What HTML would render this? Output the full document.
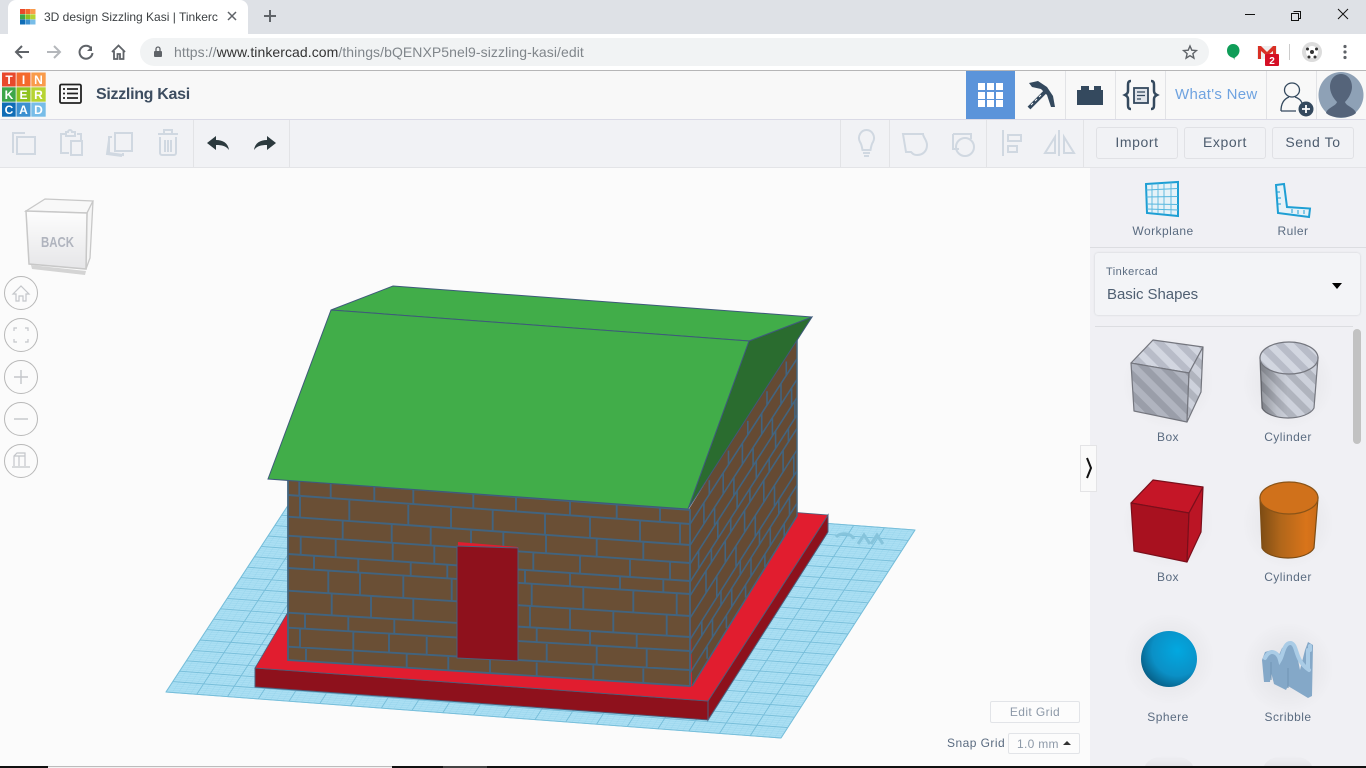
<!DOCTYPE html>
<html><head><meta charset="utf-8"><title>3D design Sizzling Kasi | Tinkercad</title>
<style>
html,body{margin:0;padding:0;width:1366px;height:768px;overflow:hidden;background:#fbfbfb;font-family:"Liberation Sans","DejaVu Sans",sans-serif}
.a{position:absolute}
.t{position:absolute;white-space:nowrap;color:#5a6b80;font-size:12px;letter-spacing:.45px}
.c{transform:translateX(-50%)}
.btn{position:absolute;top:127px;height:30px;border:1px solid #e0e1e5;border-radius:3px;background:#f1f2f5;color:#4d5c6e;font-size:14px;letter-spacing:.6px;text-align:center;line-height:29px}
.sep{position:absolute;width:1px;background:#e2e3e6}
</style></head><body>
<div class="a" style="left:0;top:0;width:1366px;height:34px;background:#dee1e6"></div>
<div class="a" style="left:8px;top:0;width:240px;height:34px;background:#fff;border-radius:8px 8px 0 0"></div>
<div class="a" style="left:0;top:34px;width:1366px;height:36px;background:#fff"></div>
<div class="a" style="left:140px;top:38px;width:1069px;height:28px;background:#f1f3f4;border-radius:14px"></div>
<div class="a" style="left:0;top:70px;width:1366px;height:1px;background:#b4b4b4"></div>
<div class="a" style="left:0;top:71px;width:1366px;height:48px;background:#f8f8f8;box-shadow:0 1px 2px #ccd"></div>
<div class="a" style="left:0;top:120px;width:1366px;height:47px;background:#f1f2f5;border-bottom:1px solid #e3e4e7"></div>
<div class="a" style="left:1090px;top:168px;width:276px;height:600px;background:#f0f0f4"></div>
<div class="a" style="left:966px;top:71px;width:49px;height:48px;background:#5b94da"></div>
<div class="sep" style="left:1065px;top:71px;height:48px"></div><div class="sep" style="left:1115px;top:71px;height:48px"></div><div class="sep" style="left:1165px;top:71px;height:48px"></div><div class="sep" style="left:1266px;top:71px;height:48px"></div><div class="sep" style="left:1316px;top:71px;height:48px"></div>
<div class="sep" style="left:193px;top:120px;height:47px"></div><div class="sep" style="left:289px;top:120px;height:47px"></div><div class="sep" style="left:840px;top:120px;height:47px"></div><div class="sep" style="left:889px;top:120px;height:47px"></div><div class="sep" style="left:986px;top:120px;height:47px"></div><div class="sep" style="left:1083px;top:120px;height:47px"></div>
<div class="a" style="left:1090px;top:247px;width:276px;height:1px;background:#dcdde1"></div>
<div class="a" style="left:1095px;top:253px;width:265px;height:62px;background:#f3f4f7;border-radius:3px;box-shadow:0 0 2px #ccced3"></div>
<div class="a" style="left:1095px;top:326px;width:258px;height:1px;background:#dcdde1"></div>
<div class="a" style="left:1353px;top:329px;width:8px;height:115px;background:#c2c2c2;border-radius:4px"></div>

<svg class="a" style="left:0;top:0" width="1366" height="768" viewBox="0 0 1366 768" xmlns="http://www.w3.org/2000/svg">
<defs>
<pattern id="s1" width="14" height="14" patternUnits="userSpaceOnUse" patternTransform="rotate(-45)"><rect width="14" height="14" fill="#d2d6e0"/><rect width="7" height="14" fill="#b8bcc8"/></pattern>
<pattern id="s2" width="14" height="14" patternUnits="userSpaceOnUse" patternTransform="rotate(-45)"><rect width="14" height="14" fill="#b0b4bf"/><rect width="7" height="14" fill="#9a9ea9"/></pattern>
<pattern id="s3" width="14" height="14" patternUnits="userSpaceOnUse" patternTransform="rotate(-45)"><rect width="14" height="14" fill="#cdd1db"/><rect width="7" height="14" fill="#b0b4be"/></pattern>
<linearGradient id="cg" x1="0" x2="1" y1="0" y2="0"><stop offset="0" stop-color="#7d4c14"/><stop offset=".35" stop-color="#b0661a"/><stop offset=".8" stop-color="#d9741a"/><stop offset="1" stop-color="#c96c18"/></linearGradient>
<linearGradient id="cgg" x1="0" x2="1" y1="0" y2="0"><stop offset="0" stop-color="#000" stop-opacity=".3"/><stop offset=".6" stop-color="#000" stop-opacity=".08"/><stop offset="1" stop-color="#000" stop-opacity="0"/></linearGradient>
<radialGradient id="sp" cx=".65" cy=".35" r=".75"><stop offset="0" stop-color="#02a8e0"/><stop offset=".6" stop-color="#0b90c6"/><stop offset="1" stop-color="#06587e"/></radialGradient>
<linearGradient id="cube" x1="0" x2="0" y1="0" y2="1"><stop offset="0" stop-color="#fdfdfd"/><stop offset="1" stop-color="#e6e6e8"/></linearGradient>
<radialGradient id="glow"><stop offset="0" stop-color="#000" stop-opacity=".07"/><stop offset="1" stop-color="#000" stop-opacity="0"/></radialGradient>
<linearGradient id="bglow" x1="0" x2="0" y1="0" y2="1"><stop offset="0" stop-color="#000" stop-opacity="0"/><stop offset="1" stop-color="#000" stop-opacity=".05"/></linearGradient>
</defs>

<!-- build plate -->
<polygon points="166,692 781,738 915,530 302,484" fill="#abdff3" stroke="#8fcfe8" stroke-width="1"/>
<path id="gridMinor" fill="none" stroke="#7cc5e2" stroke-width=".5" opacity=".35" d=""/>
<path id="gridMajor" fill="none" stroke="#76bdd9" stroke-width=".9" d=""/>
<path d="M836,537c5,-5 15,-4 18,2M858,544l6,-9 6,9M871,544l6,-9 6,9" fill="none" stroke="#86c4dc" stroke-width="3"/>

<!-- base -->
<polygon points="255,668 708,701 708,720 255,687" fill="#8e111c" stroke="#4b5f7c" stroke-width="1"/>
<polygon points="708,701 828,515 828,532 708,720" fill="#8e111c" stroke="#4b5f7c" stroke-width="1"/>
<polygon points="255,668 708,701 828,515 790,512 288,612" fill="#e11d2f" stroke="#4b5f7c" stroke-width=".8"/>

<!-- walls -->
<polygon points="288,480 690,510 690,686 288,660" fill="#6a4f35"/>
<polygon points="689,509 797,336 797,516 692,686" fill="#654a33"/>
<path id="brickF" fill="none" stroke="#42647f" stroke-width="1.900" d=""/>
<path id="brickS" fill="none" stroke="#42647f" stroke-width="1.600" d=""/>
<polygon points="288,480 690,510 690,686 288,660" fill="none" stroke="#42647f" stroke-width="1.800"/>
<path d="M797,336V516L692,686" fill="none" stroke="#42647f" stroke-width="1.500"/>

<!-- door -->
<polygon points="458,542 518,547 518,549 458,546" fill="#e11d2f"/>
<polygon points="457,546 518,548 518,661 457,658" fill="#8e111c" stroke="#4b5f7c" stroke-width="1"/>

<!-- roof -->
<polygon points="749,341 812,317 688,509" fill="#2a6c2f" stroke="#3e5a7a" stroke-width="1"/>
<polygon points="393,286 812,317 749,341 331,310" fill="#41ad49" stroke="#3e5a7a" stroke-width="1"/>
<polygon points="331,310 749,341 688,509 268,479" fill="#41ad49" stroke="#3e5a7a" stroke-width="1"/>

<!-- view cube -->
<polygon points="31,265 86,271 85,275 32,269" fill="#d4d4d4"/>
<polygon points="26,211 45,199 93,201 87,213" fill="#f8f8f8" stroke="#c8c8c8" stroke-width="1.300"/>
<polygon points="87,213 93,201 90,258 86,269" fill="#f5f5f5" stroke="#c8c8c8" stroke-width="1.300"/>
<polygon points="26,211 87,213 86,269 29,264" fill="url(#cube)" stroke="#c8c8c8" stroke-width="1.500"/>
<text x="41" y="247" textLength="33" lengthAdjust="spacingAndGlyphs" font-size="15" font-weight="700" fill="#b0b4be" font-family="Liberation Sans">BACK</text>

<!-- nav circles -->
<g fill="#fbfbfb" stroke="#b8b8b8"><circle cx="21" cy="293" r="16.5"/><circle cx="21" cy="335" r="16.5"/><circle cx="21" cy="377" r="16.5"/><circle cx="21" cy="419" r="16.5"/><circle cx="21" cy="461" r="16.5"/></g>
<g fill="none" stroke="#c4c6ca" stroke-width="1.200">
<path d="M13,294l8,-8 8,8h-3v7h-3v-5h-4v5h-3v-7z"/>
<path d="M14,331v-3h3M25,328h3v3M28,339v3h-3M17,342h-3v-3"/>
<path d="M14,377h14M21,370v14" stroke-width="1.400"/>
<path d="M14,419h14" stroke-width="1.400"/>
<path d="M14,466v-10l3,-3h8v13M14,456h11M19,456v10M12,467h18"/>
</g>

<!-- chevron tab -->
<rect x="1080.500" y="445.500" width="16" height="46" fill="#fafafa" stroke="#e4e4e6"/>
<path d="M1087,458l4,10l-4,10" fill="none" stroke="#111" stroke-width="2"/>

<!-- chrome icons -->
<g fill="none" stroke="#5f6368" stroke-width="2">
<path d="M29,52H16M22,46l-6,6 6,6"/>
<path d="M47,52h13M54,46l6,6 -6,6" stroke="#b4b7bb"/>
<path d="M91,48a6.500,6.500 0 1 0 1.500,5"/>
<path d="M112,52l6.500,-6.500 6.500,6.500M114,51v8h3.500v-5h2.500v5h3.500v-8" stroke-width="1.800"/>
<path d="M1190,46l1.800,4.200 4.600,.4 -3.500,3 1,4.500 -3.900,-2.400 -3.900,2.400 1,-4.500 -3.500,-3 4.600,-.4z" stroke-width="1.400"/>
</g>
<path d="M92,46v5h-5z" fill="#5f6368"/>
<rect x="154" y="51" width="8" height="6" rx="1" fill="#5f6368"/><path d="M156,51v-2a2,2 0 0 1 4,0v2" fill="none" stroke="#5f6368" stroke-width="1.300"/>
<path d="M270,10v12M264,16h12" fill="none" stroke="#5f6368" stroke-width="2"/>
<path d="M228,12l8,8M236,12l-8,8" fill="none" stroke="#5f6368" stroke-width="1.500"/>
<path d="M1245,14.500h10" stroke="#111" stroke-width="1"/>
<path d="M1293.500,11.500h7v7h-2M1291.500,13.500h7v7h-7z" fill="none" stroke="#111"/>
<path d="M1338,9l10,10M1348,9l-10,10" stroke="#111" stroke-width="1"/>
<path d="M1233,44c4,0 6.500,3 6.500,6.500c0,4 -3,6 -5,7.500v2l-1,-2c-4,-1 -6.500,-3.500 -6.500,-7.500c0,-3.500 2.500,-6.500 6,-6.500z" fill="#0f9d58"/>
<rect x="1257" y="46" width="20" height="13" fill="#eee"/><path d="M1258,46h3l6,6 6,-6h3v13h-3v-8l-6,5 -6,-5v8h-3z" fill="#d93025"/>
<rect x="1265" y="54" width="14" height="12" rx="1" fill="#d50f25"/><text x="1272" y="64" text-anchor="middle" font-size="10" font-weight="700" fill="#fff" font-family="Liberation Sans">2</text>
<path d="M1289.500,44v16" stroke="#ccc"/>
<circle cx="1312" cy="52" r="10" fill="#dcdcdc"/><circle cx="1312" cy="52" r="6" fill="#fff"/><circle cx="1312" cy="52" r="2" fill="#333"/><circle cx="1307.500" cy="49" r="1.500" fill="#333"/><circle cx="1316.500" cy="49" r="1.500" fill="#333"/><circle cx="1309" cy="57" r="1.500" fill="#333"/><circle cx="1315" cy="57" r="1.500" fill="#333"/>
<g fill="#5f6368"><circle cx="1345" cy="46.500" r="1.600"/><circle cx="1345" cy="52" r="1.600"/><circle cx="1345" cy="57.500" r="1.600"/></g>

<!-- favicon -->
<g><rect x="20" y="9" width="5" height="5" fill="#e8482b"/><rect x="25.300" y="9" width="5" height="5" fill="#f4692c"/><rect x="30.500" y="9" width="5" height="5" fill="#f99b4b"/><rect x="20" y="14.300" width="5" height="5" fill="#3da64a"/><rect x="25.300" y="14.300" width="5" height="5" fill="#8ec21f"/><rect x="30.500" y="14.300" width="5" height="5" fill="#b6d433"/><rect x="20" y="19.500" width="5" height="5" fill="#0f6cb6"/><rect x="25.300" y="19.500" width="5" height="5" fill="#3c90d0"/><rect x="30.500" y="19.500" width="5" height="5" fill="#78bde8"/></g>

<!-- logo -->
<g font-family="Liberation Sans" font-size="12" font-weight="700" fill="#fff" text-anchor="middle">
<rect x="2" y="72.500" width="13.700" height="14" fill="#e8482b"/><text x="9" y="84">T</text>
<rect x="16.500" y="72.500" width="14" height="14" fill="#f4692c"/><text x="23.500" y="84">I</text>
<rect x="31.300" y="72.500" width="14.400" height="14" fill="#f99b4b"/><text x="38.500" y="84">N</text>
<rect x="2" y="87.300" width="13.700" height="14.400" fill="#3da64a"/><text x="9" y="99">K</text>
<rect x="16.500" y="87.300" width="14" height="14.400" fill="#8ec21f"/><text x="23.500" y="99">E</text>
<rect x="31.300" y="87.300" width="14.400" height="14.400" fill="#b6d433"/><text x="38.500" y="99">R</text>
<rect x="2" y="102.500" width="13.700" height="14.200" fill="#0f6cb6"/><text x="9" y="114">C</text>
<rect x="16.500" y="102.500" width="14" height="14.200" fill="#3c90d0"/><text x="23.500" y="114">A</text>
<rect x="31.300" y="102.500" width="14.400" height="14.200" fill="#78bde8"/><text x="38.500" y="114">D</text>
</g>

<!-- list icon -->
<rect x="60" y="84.500" width="21" height="18.500" rx="1.500" fill="none" stroke="#222" stroke-width="1.800"/>
<path d="M67,89h11M67,93.500h11M67,98h11M63,89h2M63,93.500h2M63,98h2" stroke="#222" stroke-width="1.800"/>

<!-- header right icons -->
<g fill="#fff"><rect x="978" y="83" width="7" height="7"/><rect x="987" y="83" width="7" height="7"/><rect x="996" y="83" width="7" height="7"/><rect x="978" y="92" width="7" height="7"/><rect x="987" y="92" width="7" height="7"/><rect x="996" y="92" width="7" height="7"/><rect x="978" y="100" width="7" height="7"/><rect x="987" y="100" width="7" height="7"/><rect x="996" y="100" width="7" height="7"/></g>
<path d="M1029,83L1038,81L1047,87L1053,96L1055,107L1051,107L1047,95L1041,89L1032,87z" fill="#34495e"/>
<path d="M1029,108L1047,90" fill="none" stroke="#34495e" stroke-width="4"/>
<path d="M1031,105l2,-2M1035,101l2,-2M1039,97l2,-2" stroke="#f8f8f8" stroke-width="1"/>
<path d="M1077,90h4v-4h8v4h5v-4h7v4h2v15h-26z" fill="#34495e"/>
<g fill="none" stroke="#34495e" stroke-width="2.500"><path d="M1131,81c-3,0 -3,2 -3,5v5c0,2 -1,3 -3,4c2,1 3,2 3,4v5c0,3 0,5 3,5"/><path d="M1151,81c3,0 3,2 3,5v5c0,2 1,3 3,4c-2,1 -3,2 -3,4v5c0,3 0,5 -3,5"/><rect x="1134" y="88" width="14" height="15" stroke-width="1.800" fill="#e0e4ea"/><path d="M1137,92h8M1137,95.500h8M1137,99h4" stroke-width="1.200"/></g>
<g fill="none" stroke="#34495e" stroke-width="1.300"><ellipse cx="1292" cy="90" rx="7.500" ry="7"/><path d="M1281,111c0,-8 3,-12 8,-14M1295,97c3,1 6,3 7,6M1281,111h15"/></g>
<circle cx="1306" cy="109" r="7.500" fill="#34495e"/><path d="M1302,109h8M1306,105v8" stroke="#fff" stroke-width="1.800"/>
<ellipse cx="1341" cy="95" rx="22.500" ry="23" fill="#8ea1b6"/>
<path d="M1326,113c1,-5 10,-7 11,-11c-4,-4 -7,-10 -7,-15c0,-8 5,-13 11,-13s11,5 11,13c0,5 -3,11 -7,15c1,4 10,6 11,11c-6,6 -24,6 -30,0z" fill="#55647a"/>

<!-- toolbar icons -->
<g fill="none" stroke="#d0d8e1" stroke-width="2">
<path d="M25,133h-12v20M17,137h18v17h-18z" />
<path d="M66,134h-5v19h8M77,134h4v7M71,141h11v14h-11zM66,135v-3h2a2,2 0 0 1 4,0h3v4h-9z"/>
<path d="M115,133h17v18h-17zM112,137h-3v16l14,2v-2M109,140l-2,14 15,2"/>
<path d="M158,134h20M164,133v-3h8v3M160,137v16a2,2 0 0 0 2,2h12a2,2 0 0 0 2,-2v-16M165,140v12M168,140v12M171,140v12"/>
<path d="M873,142a7.500,8 0 1 0 -13,0c1.500,2 2,5 2.500,8h8c.5,-3 1,-6 2.500,-8zM863,153h7M864,156h5"/>
<path d="M903,134h20c0,3 4,6 4,11c0,6 -4,10 -10,10c-3,0 -4,-1 -6,-3h-5z"/>
<path d="M953,134h18v5M953,134v15h6"/><circle cx="965" cy="147" r="9"/>
<path d="M1003,130v26M1008,135h13v6h-13zM1008,146h9v6h-9z"/>
<path d="M1059,130v26M1055,137v16h-10zM1064,137v16h10z"/>
</g>
<g fill="#2c3a3e"><path d="M207,143l9,-7v4c7,0 12,3 13,10c-3,-4 -7,-5 -13,-5v5z"/><path d="M276,143l-9,-7v4c-7,0 -12,3 -13,10c3,-4 7,-5 13,-5v5z"/></g>

<!-- workplane / ruler -->
<g fill="#e6f2f8" stroke="#1e9fd4"><polygon points="1146,184 1178,182 1178,216 1147,213" stroke-width="2"/><path d="M1152,184v29M1158,183.500v30M1164,183v31M1171,182.500v32M1146.500,190l31,-1.500M1146.500,197l31,-.5M1147,204l31,.5M1147,209l31,1" stroke-width=".9" stroke="#55b6de"/></g>
<g fill="#e6f2f8" stroke="#1e9fd4"><polygon points="1276,185 1284,184 1287,207 1310,208.500 1309,217 1278,213" stroke-width="2"/><path d="M1277,192h3M1278,198h3M1278,204h3M1292,213v-4M1298,214v-4M1304,214v-4" stroke-width="1"/></g>

<!-- dropdown arrow -->
<path d="M1332,283h10l-5,6z" fill="#000"/>

<!-- shapes -->
<ellipse cx="1168" cy="383" rx="46" ry="46" fill="url(#glow)"/><ellipse cx="1288" cy="383" rx="46" ry="46" fill="url(#glow)"/>
<ellipse cx="1168" cy="523" rx="46" ry="46" fill="url(#glow)"/><ellipse cx="1288" cy="523" rx="46" ry="46" fill="url(#glow)"/>
<ellipse cx="1169" cy="659" rx="46" ry="46" fill="url(#glow)"/><ellipse cx="1288" cy="668" rx="46" ry="46" fill="url(#glow)"/>
<path d="M1145,766c5,-14 43,-14 48,0z" fill="url(#bglow)"/><path d="M1264,766c5,-14 43,-14 48,0z" fill="url(#bglow)"/>

<g stroke="#74767e" stroke-width="1.200" stroke-linejoin="round">
<polygon points="1131,363 1153,340 1203,347 1189,373" fill="url(#s1)"/>
<polygon points="1131,363 1189,373 1187,422 1134,411" fill="url(#s2)"/>
<polygon points="1189,373 1203,347 1201,392 1187,422" fill="url(#s3)"/>
</g>
<g stroke="#7a0f1b" stroke-width="1.200" stroke-linejoin="round">
<polygon points="1131,503 1153,480 1203,487 1189,513" fill="#c51627"/>
<polygon points="1131,503 1189,513 1187,562 1134,551" fill="#a8111f"/>
<polygon points="1189,513 1203,487 1201,532 1187,562" fill="#bb1525"/>
</g>
<path d="M1260,358l2,50c3,6 14,10 26,10s23,-4 26,-10l4,-50z" fill="url(#s3)" stroke="#74767e" stroke-width="1.200"/>
<path d="M1260,358l2,50c3,6 14,10 26,10v-44c-12,0 -25,-6 -28,-16z" fill="url(#cgg)"/>
<ellipse cx="1289" cy="358" rx="29" ry="16" fill="url(#s1)" stroke="#74767e" stroke-width="1.200"/>
<path d="M1260,498l2,50c3,6 14,10 26,10s23,-4 26,-10l4,-50z" fill="url(#cg)" stroke="#7d4c14" stroke-width="1.200"/>
<ellipse cx="1289" cy="498" rx="29" ry="16" fill="#d0711b" stroke="#8a5418" stroke-width="1.200"/>
<circle cx="1169" cy="659" r="28" fill="url(#sp)"/>
<path d="M1262,660L1264,682L1270,682L1271,672L1274,684L1286,690L1288,686L1308,698L1312,696L1313,645L1308,642L1305,650L1300,670L1296,650L1290,643L1282,648L1279,655L1272,650L1265,652z" fill="#84a8c8"/>
<path d="M1265,658C1270,648 1278,652 1280,660C1283,655 1284,642 1291,643C1298,645 1294,660 1309,670" fill="none" stroke="#aaccE6" stroke-width="4" stroke-linecap="round"/>
<path d="M1308,668V650M1310,650v-4" fill="none" stroke="#aaccE6" stroke-width="4" stroke-linecap="round"/>
<path d="M1271,662v18M1288,668v20" stroke="#6f94b5" stroke-width="1"/>

<!-- bottom strip -->
<rect x="0" y="766" width="1366" height="2" fill="#111"/>
<rect x="48" y="766" width="344" height="1" fill="#bcbcbc"/><rect x="48" y="767" width="344" height="1" fill="#f2f2f2"/>
<rect x="443" y="766" width="44" height="2" fill="#444"/>
</svg>

<div class="t" style="left:44px;top:10px;width:174px;overflow:hidden;color:#3c4043;letter-spacing:0">3D design Sizzling Kasi | Tinkercad</div>
<div class="t" style="left:174px;top:44px;font-size:14px;letter-spacing:.07px;color:#80868b">https://<span style="color:#333">www.tinkercad.com</span>/things/bQENXP5nel9-sizzling-kasi/edit</div>
<div class="t" style="left:96px;top:86px;font-size:16px;font-weight:700;color:#3d4d60;letter-spacing:-.3px">Sizzling Kasi</div>
<div class="t" style="left:1175px;top:86px;font-size:15px;color:#6fa3e0;letter-spacing:.3px">What's New</div>
<div class="btn" style="left:1096px;width:80px">Import</div>
<div class="btn" style="left:1184px;width:80px">Export</div>
<div class="btn" style="left:1272px;width:80px">Send To</div>
<div class="t c" style="left:1163px;top:224px">Workplane</div>
<div class="t c" style="left:1293px;top:224px">Ruler</div>
<div class="t" style="left:1106px;top:266px;font-size:11px">Tinkercad</div>
<div class="t" style="left:1107px;top:286px;font-size:15px;color:#4f5f72;letter-spacing:-.05px">Basic Shapes</div>
<div class="t c" style="left:1168px;top:430px">Box</div>
<div class="t c" style="left:1288px;top:430px">Cylinder</div>
<div class="t c" style="left:1168px;top:570px">Box</div>
<div class="t c" style="left:1288px;top:570px">Cylinder</div>
<div class="t c" style="left:1168px;top:710px">Sphere</div>
<div class="t c" style="left:1288px;top:710px">Scribble</div>
<div class="a" style="left:990px;top:701px;width:88px;height:20px;background:#fcfcfc;border:1px solid #e2e4e8;border-radius:2px;color:#8d99a8;font-size:12px;letter-spacing:.4px;text-align:center;line-height:20px">Edit Grid</div>
<div class="t" style="left:947px;top:736px">Snap Grid</div>
<div class="a" style="left:1008px;top:733px;width:70px;height:19px;background:#fcfcfc;border:1px solid #e2e4e8;border-radius:2px;color:#8d99a8;font-size:12px;letter-spacing:.3px;line-height:21px;padding-left:0"><span style="margin-left:8px">1.0 mm</span><span style="position:absolute;left:54px;top:7px;width:0;height:0;border:4px solid transparent;border-top:0;border-bottom:4px solid #333"></span></div>

<script>
(function(){
function P(u,v){var A=[166,692],B=[781,738],C=[915,530],D=[302,484];
 return [(1-v)*((1-u)*A[0]+u*B[0])+v*((1-u)*D[0]+u*C[0]),(1-v)*((1-u)*A[1]+u*B[1])+v*((1-u)*D[1]+u*C[1])];}
function seg(a,b){return "M"+a[0].toFixed(1)+","+a[1].toFixed(1)+"L"+b[0].toFixed(1)+","+b[1].toFixed(1);}
var maj="",min="",i,n=20;
for(i=0;i<=n;i++){maj+=seg(P(i/n,0),P(i/n,1))+seg(P(0,i/n),P(1,i/n));}
for(i=0;i<=100;i++){if(i%5){min+=seg(P(i/100,0),P(i/100,1))+seg(P(0,i/100),P(1,i/100));}}
document.getElementById("gridMajor").setAttribute("d",maj);
document.getElementById("gridMinor").setAttribute("d",min);
var L=[480.5,495,516.7,535.7,554,568,590.7,612.7,627.7,646.7,660];
var R=[510,524,545,563,581,594,616,637,651,670,686];
function y(k,x){return L[k]+(R[k]-L[k])*(x-288)/402;}
var V=[[88,182,313,430,610,738,900,1040,1170],[90,238,415,543,668,825,960,1110,1230],[218,365,482,603,700,828,980,1120],[92,197,368,493,790,930,1080,1200],[132,265,422,532,765,900,1050,1180],[175,270,400,545,785,940,1090,1220],[185,303,430,780,900,1030,1190],[105,235,373,800,960,1100],[90,250,357,470,830,980,1130],[108,248,410,535,660,800,970,1120]];
var f="";
for(i=1;i<10;i++){f+=seg([288,y(i,288)],[690,y(i,690)]);}
V.forEach(function(a,k){a.forEach(function(z){var x=270+z/3;f+=seg([x,y(k,x)],[x,y(k+1,x)]);});});
document.getElementById("brickF").setAttribute("d",f);
var s="",o=[.1,.05,.15,0,.12,.07,.17,.03,.13,.08];
function S(u,v){return [690+107*u,(1-u)*(510+176*v)+u*(345+171*v)];}
function w(k){return (L[k]-480.5)/179.5;}
for(i=1;i<10;i++){s+=seg(S(0,w(i)),S(1,w(i)));}
for(i=0;i<10;i++){for(var u=o[i]+.08;u<1;u+=.18){s+=seg(S(u,w(i)),S(u,w(i+1)));}}
document.getElementById("brickS").setAttribute("d",s);
})();
</script>
</body></html>
